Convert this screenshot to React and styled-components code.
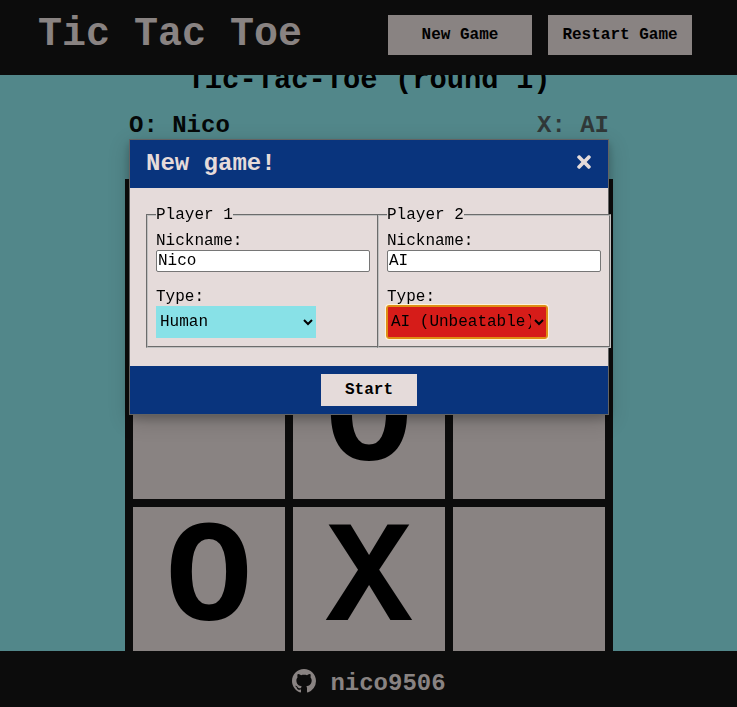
import React from "react";
import styled, { createGlobalStyle } from "styled-components";
import { FaTimes } from "react-icons/fa";

const GlobalStyle = createGlobalStyle`
  *, *::before, *::after { box-sizing: border-box; }
  body {
    margin: 0;
    overflow: hidden;
    background: #52878a;
    color: #000;
    font: 16px/18px "Liberation Mono", monospace;
  }
`;

const Page = styled.div`
  height: 707px;
  display: grid;
  grid-template-rows: 75px minmax(0, 1fr) 56px;
`;

const Header = styled.header`
  background: #0c0c0c;
  color: #898382;
  display: flex;
  justify-content: space-between;
  align-items: flex-start;
  padding: 15px 45px 0 38px;
`;

const Brand = styled.h1`
  margin: -3px 0 0;
  font-size: 40px;
  line-height: 45px;
`;

const Toolbar = styled.nav`
  display: flex;
  gap: 16px;
`;

const Button = styled.button`
  width: ${(p) => (p.$compact ? 96 : 144)}px;
  height: ${(p) => (p.$compact ? 32 : 40)}px;
  padding: 0;
  border: 0;
  background: ${(p) => (p.$compact ? "#e5dbda" : "#898382")};
  color: #000;
  font: bold 16px "Liberation Mono", monospace;
`;

const Main = styled.main`
  overflow: hidden;
  display: flex;
  flex-direction: column;
  align-items: center;
  padding-left: 1px;
`;

const RoundTitle = styled.h2`
  margin: -11px 0 15px;
  font-size: 28.8px;
  line-height: 33px;
`;

const Scores = styled.div`
  width: 480px;
  height: 67px;
  flex: none;
  display: flex;
  justify-content: space-between;
  font-size: 24px;
  font-weight: bold;
  line-height: 27px;
`;

const Score = styled.span`
  color: ${(p) => (p.$active ? "#050808" : "#303838")};
`;

const Board = styled.div`
  flex: none;
  display: grid;
  grid-template-columns: repeat(3, 152px);
  grid-auto-rows: 152px;
  gap: 8px;
  padding: 8px;
  background: #0c0c0c;
`;

const Cell = styled.div`
  display: flex;
  align-items: center;
  justify-content: center;
  background: #898382;
  font-size: 144px;
  font-weight: bold;
  line-height: 150px;
  padding-bottom: 2px;
`;

const Footer = styled.footer`
  z-index: 1;
  background: #0c0c0c;
  color: #898382;
  display: flex;
  justify-content: center;
  align-items: center;
  gap: 14px;
  padding: 4px 0 0 1px;
  font-size: 24px;
  font-weight: bold;
  line-height: 27px;
`;

const Account = styled.span`
  padding-top: 5px;
`;

const Overlay = styled.div`
  position: fixed;
  inset: 0;
  z-index: 2;
  display: flex;
  justify-content: center;
  align-items: flex-start;
  padding: 139px 0 0 1px;
`;

const Dialog = styled.form`
  width: 480px;
  height: 276px;
  display: grid;
  grid-template-rows: 48px 178px 48px;
  border: 1px solid #636363;
  background: #e5dbda;
  box-shadow: 0 4px 8px rgba(0, 0, 0, 0.2), 0 6px 20px rgba(0, 0, 0, 0.19);
`;

const DialogBar = styled.div`
  background: #09347d;
  color: #e5dbda;
  display: flex;
  align-items: center;
  justify-content: ${(p) => (p.$centered ? "center" : "space-between")};
  padding: 0 ${(p) => (p.$centered ? 16 : 14)}px 0 16px;
`;

const DialogTitle = styled.h2`
  margin: -2px 0 0;
  font-size: 24px;
  line-height: 27px;
`;

const Close = styled.button`
  display: flex;
  margin: -4px 0 0;
  padding: 0;
  border: 0;
  background: none;
  color: inherit;
`;

const Players = styled.div`
  display: grid;
  grid-template-columns: 215px 215px;
  gap: 16px;
  padding: 18px 16px 16px;
  align-items: start;
`;

const Player = styled.fieldset`
  width: 234px;
  height: 142px;
  margin: 0;
  padding: 8px;
  border: 2px groove #c0c0c0;
  background: #e5dbda;
`;

const Legend = styled.legend`
  padding: 0;
`;

const Label = styled.label`
  display: block;
`;

const Nickname = styled.input`
  display: block;
  width: 214px;
  height: 22px;
  margin: 0 0 16px;
  padding: 1px;
  border: 1px solid #767676;
  border-radius: 2px;
  background: #fff;
  color: #000;
  font: 16px "Liberation Mono", monospace;
`;

const TypeSelect = styled.select`
  display: block;
  width: 160px;
  height: 32px;
  border: 0;
  border-radius: 0;
  background: ${(p) => (p.$focused ? "#d61c19" : "#88e1e7")};
  color: #000;
  font: 16px "Liberation Mono", monospace;
  outline: ${(p) => (p.$focused ? "1px solid #df8e14" : "none")};
  ${(p) =>
    p.$focused &&
    `
    border-radius: 2px;
    box-shadow: inset 0 0 0 1px #df8e14, 0 0 0 2px #fff3d8;
  `}
`;

const players = [
  { id: 1, name: "Nico", type: "Human" },
  { id: 2, name: "AI", type: "AI (Unbeatable)", focused: true },
];

const marks = ["", "", "", "", "O", "", "O", "X", ""];

function GithubMark() {
  return (
    <svg width="24" height="24" viewBox="0 0 16 16" fill="currentColor">
      <path d="M8 0C3.58 0 0 3.58 0 8c0 3.54 2.29 6.53 5.47 7.59.4.07.55-.17.55-.38 0-.19-.01-.82-.01-1.49-2.01.37-2.53-.49-2.69-.94-.09-.23-.48-.94-.82-1.13-.28-.15-.68-.52-.01-.53.63-.01 1.08.58 1.23.82.72 1.21 1.87.87 2.33.66.07-.52.28-.87.51-1.07-1.78-.2-3.64-.89-3.64-3.95 0-.87.31-1.59.82-2.15-.08-.2-.36-1.02.08-2.12 0 0 .67-.21 2.2.82.64-.18 1.32-.27 2-.27s1.36.09 2 .27c1.53-1.04 2.2-.82 2.2-.82.44 1.1.16 1.92.08 2.12.51.56.82 1.27.82 2.15 0 3.07-1.87 3.75-3.65 3.95.29.25.54.73.54 1.48 0 1.07-.01 1.93-.01 2.2 0 .21.15.46.55.38A8.01 8.01 0 0 0 16 8c0-4.42-3.58-8-8-8z" />
    </svg>
  );
}

export default function App() {
  return (
    <Page>
      <GlobalStyle />
      <Header>
        <Brand>Tic Tac Toe</Brand>
        <Toolbar>
          <Button>New Game</Button>
          <Button>Restart Game</Button>
        </Toolbar>
      </Header>
      <Main>
        <RoundTitle>Tic-Tac-Toe (round 1)</RoundTitle>
        <Scores>
          <Score $active>O: Nico</Score>
          <Score>X: AI</Score>
        </Scores>
        <Board>
          {marks.map((mark, i) => (
            <Cell key={i}>{mark}</Cell>
          ))}
        </Board>
      </Main>
      <Footer>
        <GithubMark />
        <Account>nico9506</Account>
      </Footer>
      <Overlay>
        <Dialog>
          <DialogBar>
            <DialogTitle>New game!</DialogTitle>
            <Close type="button" aria-label="Close">
              <FaTimes size={20} />
            </Close>
          </DialogBar>
          <Players>
            {players.map((p) => (
              <Player key={p.id}>
                <Legend>Player {p.id}</Legend>
                <Label>Nickname:</Label>
                <Nickname defaultValue={p.name} />
                <Label>Type:</Label>
                <TypeSelect $focused={p.focused} defaultValue={p.type}>
                  <option>Human</option>
                  <option>AI (Unbeatable)</option>
                </TypeSelect>
              </Player>
            ))}
          </Players>
          <DialogBar $centered>
            <Button type="button" $compact>
              Start
            </Button>
          </DialogBar>
        </Dialog>
      </Overlay>
    </Page>
  );
}
